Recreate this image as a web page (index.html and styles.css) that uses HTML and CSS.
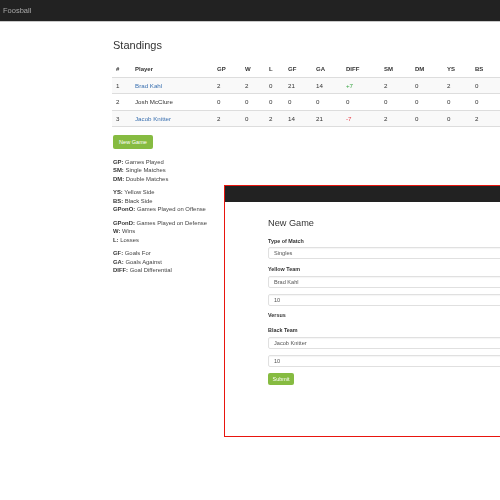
FILE: index.html
```html
<!DOCTYPE html>
<html>
<head>
<meta charset="utf-8">
<link rel="stylesheet" href="styles.css">
</head>
<body>
<div class="page">
  <div class="navbar"><span class="brand">Foosball</span></div>
  <div class="container">
    <h2 class="title">Standings</h2>
    <table class="standings">
      <colgroup>
        <col style="width:19px"><col style="width:82px"><col style="width:28px"><col style="width:24px"><col style="width:19px"><col style="width:28px"><col style="width:30px"><col style="width:38px"><col style="width:31px"><col style="width:32px"><col style="width:28px"><col style="width:60px">
      </colgroup>
      <thead>
        <tr><th>#</th><th>Player</th><th>GP</th><th>W</th><th>L</th><th>GF</th><th>GA</th><th>DIFF</th><th>SM</th><th>DM</th><th>YS</th><th>BS</th></tr>
      </thead>
      <tbody>
        <tr class="odd"><td>1</td><td><a class="link">Brad Kahl</a></td><td>2</td><td>2</td><td>0</td><td>21</td><td>14</td><td class="pos">+7</td><td>2</td><td>0</td><td>2</td><td>0</td></tr>
        <tr><td>2</td><td>Josh McClure</td><td>0</td><td>0</td><td>0</td><td>0</td><td>0</td><td>0</td><td>0</td><td>0</td><td>0</td><td>0</td></tr>
        <tr class="odd"><td>3</td><td><a class="link">Jacob Knitter</a></td><td>2</td><td>0</td><td>2</td><td>14</td><td>21</td><td class="neg">-7</td><td>2</td><td>0</td><td>0</td><td>2</td></tr>
      </tbody>
    </table>
    <div class="btn btn-new">New Game</div>
    <div class="legends">
      <dl class="legend">
        <dd><b>GP:</b> Games Played</dd>
        <dd><b>SM:</b> Single Matches</dd>
        <dd><b>DM:</b> Double Matches</dd>
      </dl>
      <dl class="legend">
        <dd><b>YS:</b> Yellow Side</dd>
        <dd><b>BS:</b> Black Side</dd>
        <dd><b>GPonO:</b> Games Played on Offense</dd>
      </dl>
      <dl class="legend">
        <dd><b>GPonD:</b> Games Played on Defense</dd>
        <dd><b>W:</b> Wins</dd>
        <dd><b>L:</b> Losses</dd>
      </dl>
      <dl class="legend">
        <dd><b>GF:</b> Goals For</dd>
        <dd><b>GA:</b> Goals Against</dd>
        <dd><b>DIFF:</b> Goal Differential</dd>
      </dl>
    </div>
  </div>

  <div class="window">
    <div class="win-bar"></div>
    <div class="win-body">
      <div class="win-title">New Game</div>
      <div class="label l-type">Type of Match</div>
      <div class="input i-first">Singles</div>
      <div class="label l-yellow">Yellow Team</div>
      <div class="input i-first">Brad Kahl</div>
      <div class="input i-second">10</div>
      <div class="label l-versus">Versus</div>
      <div class="label l-black">Black Team</div>
      <div class="input i-first">Jacob Knitter</div>
      <div class="input i-second">10</div>
      <div class="btn btn-submit">Submit</div>
    </div>
  </div>
</div>
</body>
</html>
```
FILE: styles.css
```css
html, body {
  margin: 0;
  padding: 0;
  background: #fff;
}
body {
  font-family: "Liberation Sans", Arial, sans-serif;
  color: #333;
  -webkit-font-smoothing: antialiased;
}
.page {
  width: 500px;
  height: 500px;
  overflow: hidden;
  position: relative;
}
.navbar {
  height: 21px;
  background: #222;
  border-bottom: 1px solid #c9c9c9;
  display: flex;
  align-items: center;
  padding-left: 3px;
}
.brand {
  font-size: 7.5px;
  color: #a8a8a8;
  will-change: transform;
}
.container {
  padding-left: 112px;
}
.title {
  margin: 17px 0 0 1px;
  font-size: 11px;
  line-height: 13px;
  font-weight: 500;
  color: #333;
  will-change: transform;
}
.standings {
  margin-top: 9px;
  border-collapse: collapse;
  table-layout: fixed;
  width: 419px;
  font-size: 6.2px;
  will-change: transform;
}
.standings th {
  font-size: 6px;
  font-weight: bold;
  text-align: left;
  height: 15.5px;
  padding: 0 4px;
  border-bottom: 1.5px solid #ddd;
  vertical-align: middle;
}
.standings td {
  height: 15.5px;
  padding: 0 4px;
  border-top: 1px solid #ddd;
  vertical-align: middle;
  color: #333;
}
.standings tbody tr:last-child td {
  border-bottom: 1px solid #ddd;
}
.standings tr.odd td {
  background: #f9f9f9;
}
.link {
  color: #3a70b0;
}
.pos {
  color: #3aa545 !important;
}
.neg {
  color: #e8414b !important;
}
.btn {
  background: #86bb41;
  color: #fff;
  border-radius: 2px;
  display: flex;
  align-items: center;
  justify-content: center;
  font-size: 5.6px;
}
.btn-new {
  margin-top: 7.5px;
  margin-left: 1px;
  width: 40px;
  height: 14px;
}
.legends {
  padding-top: 9px;
  will-change: transform;
}
.legend {
  margin: 0 0 5px 1px;
  font-size: 5.9px;
  line-height: 8.45px;
  color: #444;
}
.legend dd {
  margin: 0;
}
.legend b {
  color: #333;
}
.window {
  position: absolute;
  left: 224px;
  top: 185px;
  width: 320px;
  height: 250px;
  border: 1px solid #e8150e;
}
.win-bar {
  height: 16px;
  background: #222;
}
.win-body {
  padding-left: 43px;
  display: flex;
  flex-direction: column;
  align-items: flex-start;
  will-change: transform;
}
.win-title {
  margin-top: 16px;
  font-size: 9.2px;
  line-height: 11px;
  color: #333;
}
.label {
  font-size: 5.4px;
  line-height: 7px;
  font-weight: bold;
  color: #333;
}
.l-type { margin-top: 8.5px; }
.l-yellow { margin-top: 7px; }
.l-versus { margin-top: 6.5px; }
.l-black { margin-top: 8px; }
.input {
  box-sizing: border-box;
  width: 300px;
  height: 12px;
  border: 1px solid #e0e0e0;
  border-radius: 2px;
  box-shadow: inset 0 1px 1px rgba(0,0,0,0.04);
  padding-left: 5px;
  display: flex;
  align-items: center;
  font-size: 5.6px;
  color: #555;
}
.i-first { margin-top: 2.5px; }
.i-second { margin-top: 6px; }
.btn-submit {
  margin-top: 6.5px;
  width: 26px;
  height: 12px;
  font-size: 5.4px;
}
```
